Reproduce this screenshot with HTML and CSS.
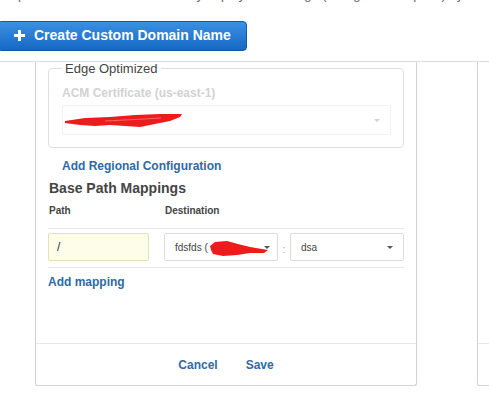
FILE: index.html
```html
<!DOCTYPE html>
<html lang="en">
<head>
    <meta charset="UTF-8">
    <title>Custom Domain Names</title>
    <link rel="stylesheet" href="styles.css">
</head>
<body>

    <p class="intro">Map a custom domain name to any deployed API stage (or regional endpoint) by configuring its settings.</p>

    <button class="create-btn">
        <svg width="11" height="11" viewBox="0 0 11 11"><path d="M4 0h3v4h4v3H7v4H4V7H0V4h4z" fill="#fff"/></svg>
        Create Custom Domain Name
    </button>

    <div class="cards">
        <div class="card">
            <div class="card-body">
                <fieldset class="endpoint">
                    <legend>Edge Optimized</legend>
                    <label class="field-label">ACM Certificate (us-east-1)</label>
                    <div class="select select-off">
                        <svg class="scribble" width="118" height="16" viewBox="0 0 118 16">
                            <path d="M0 9 L20 6 L45 5 L70 3 L95 2 L117 2 L115 5 L105 9 L90 12 L75 15 L60 14 L45 13 L30 14 L15 13 L0 11 Z" fill="#ec1c1c"/>
                            <path d="M40 9 C60 8 80 7 96 6" stroke="#f56a5e" stroke-width="1" fill="none"/>
                        </svg>
                        <span class="caret"></span>
                    </div>
                </fieldset>

                <a class="link indent" href="#">Add Regional Configuration</a>

                <h3 class="section-title">Base Path Mappings</h3>

                <div class="mapping-head">
                    <span>Path</span>
                    <span>Destination</span>
                </div>

                <div class="mapping-row">
                    <input class="path-input" type="text" value="/">
                    <div class="select">
                        <span class="option">fdsfds (</span>
                        <svg class="scribble small" width="60" height="15" viewBox="0 0 60 15">
                            <path d="M1 5 L6 1 L18 0 L29 3 L41 6 L59 9 L55 12 L41 12 L28 14 L14 15 L4 13 L2 9 Z" fill="#ec1c1c"/>
                        </svg>
                        <span class="caret"></span>
                    </div>
                    <span class="colon">:</span>
                    <div class="select">
                        <span class="option">dsa</span>
                        <span class="caret"></span>
                    </div>
                </div>

                <a class="link" href="#">Add mapping</a>
            </div>
            <div class="card-footer">
                <a class="footer-link" href="#">Cancel</a>
                <a class="footer-link" href="#">Save</a>
            </div>
        </div>

        <div class="card">
            <div class="card-body"></div>
            <div class="card-footer"></div>
        </div>
    </div>

</body>
</html>
```

FILE: styles.css
```css
* {
    box-sizing: border-box;
}

body {
    margin: 0;
    font-family: "Liberation Sans", Arial, sans-serif;
    color: #444;
    background-color: #fff;
    overflow: hidden;
}

.intro {
    margin: -13px 0 0 0;
    font-size: 13px;
    line-height: 16px;
    color: #666;
    white-space: nowrap;
}

.create-btn {
    display: flex;
    align-items: center;
    gap: 9px;
    margin: 18px 0 0 -3px;
    height: 30px;
    padding: 0 15px 2px 16px;
    border: 1px solid #1459a6;
    border-radius: 4px;
    background: linear-gradient(#3a90e2, #1668c4);
    color: #fff;
    font: bold 14px "Liberation Sans", Arial, sans-serif;
}

.create-btn svg {
    margin-top: 1px;
}

.cards {
    display: flex;
    gap: 60px;
    margin-top: 10px;
    padding-left: 35px;
    border-top: 1px solid #dcdcdc;
}

.card {
    flex: 0 0 382px;
    height: 324px;
    display: flex;
    flex-direction: column;
    background-color: #fff;
    border: 1px solid #d3d3d3;
    border-top: none;
    border-radius: 0 0 3px 3px;
    box-shadow: 0 2px 2px -1px rgba(0, 0, 0, 0.15);
}

.card-body {
    flex: 1;
    padding: 0 12px;
}

.endpoint {
    margin: 0;
    padding: 10px 12px 12px 13px;
    border: 1px solid #dedede;
    border-radius: 4px;
}

.endpoint legend {
    padding: 0 3px;
    font-size: 13px;
    line-height: 13px;
    color: #444;
}

.field-label {
    display: block;
    font-size: 12px;
    font-weight: bold;
    line-height: 16px;
    color: #d2d2d2;
}

.select {
    display: flex;
    align-items: center;
    height: 28px;
    padding: 0 10px 0 10px;
    border: 1px solid #dcdcdc;
    border-radius: 2px;
    font-size: 10px;
    color: #444;
    background-color: #fff;
    white-space: nowrap;
}

.option {
    flex-shrink: 0;
}

.select-off {
    margin-top: 4px;
    height: 30px;
    padding-left: 2px;
    border-color: #f2f2f2;
}

.scribble {
    flex-shrink: 0;
}

.scribble.small {
    margin-left: 1px;
    margin-top: 2px;
}

.caret {
    margin-left: auto;
    flex-shrink: 0;
    width: 0;
    height: 0;
    border-left: 3px solid transparent;
    border-right: 3px solid transparent;
    border-top: 3px solid #555;
}

.select-off .caret {
    border-top-color: #d0d0d0;
}

.scribble.small + .caret {
    margin-left: -5px;
}

.link {
    display: block;
    font-size: 12px;
    font-weight: bold;
    line-height: 16px;
    color: #2f6aa3;
    text-decoration: none;
}

.link.indent {
    margin: 10px 0 0 14px;
}

.section-title {
    margin: 5px 0 0 1px;
    font-size: 14px;
    line-height: 18px;
    color: #444;
}

.mapping-head,
.mapping-row {
    display: grid;
    grid-template-columns: 116px 114px 12px 1fr;
    border-bottom: 1px solid #e6e6e6;
}

.mapping-head {
    margin-top: 7px;
    padding-bottom: 10px;
    font-size: 10px;
    font-weight: bold;
    line-height: 14px;
    color: #444;
}

.mapping-head span {
    padding-left: 1px;
}

.mapping-head span:last-child {
    grid-column: 2 / 5;
}

.mapping-row {
    padding: 4px 0 6px;
    align-items: center;
}

.mapping-row + .link {
    margin-top: 6px;
}

.path-input {
    width: 101px;
    height: 28px;
    padding: 0 8px;
    border: 1px solid #e6e2b8;
    border-radius: 2px;
    background-color: #fefde9;
    font: 12px "Liberation Sans", Arial, sans-serif;
    color: #333;
}

.colon {
    text-align: center;
    font-size: 11px;
    color: #aaa;
    padding-top: 3px;
}

.card-footer {
    height: 42px;
    display: flex;
    justify-content: center;
    align-items: center;
    gap: 28px;
    border-top: 1px solid #e8e8e8;
}

.footer-link {
    font-size: 12px;
    font-weight: bold;
    color: #2f6aa3;
    text-decoration: none;
}
```
